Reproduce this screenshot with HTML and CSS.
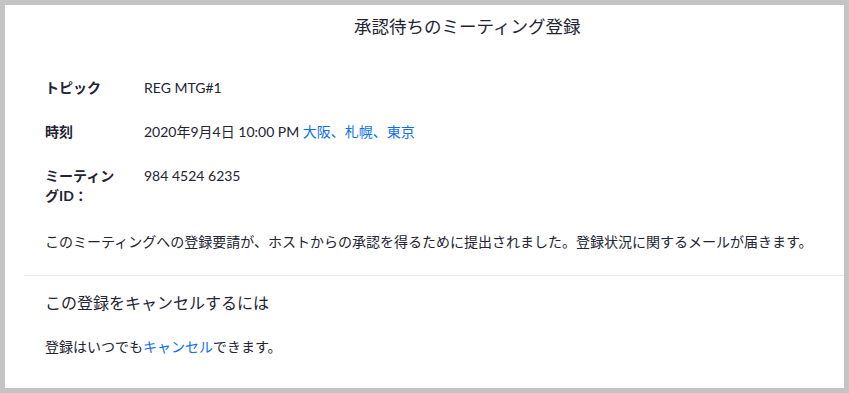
FILE: index.html
```html
<!DOCTYPE html>
<html lang="ja">
<head>
<meta charset="utf-8">
<title>承認待ちのミーティング登録</title>
<link rel="stylesheet" href="styles.css">
</head>
<body>
<div class="frame">
  <h1 class="title">承認待ちのミーティング登録</h1>
  <div class="details">
    <div class="row">
      <div class="label">トピック</div>
      <div class="value">REG MTG#1</div>
    </div>
    <div class="row">
      <div class="label">時刻</div>
      <div class="value">2020年9月4日 10:00 PM <a class="link" href="#">大阪、札幌、東京</a></div>
    </div>
    <div class="row">
      <div class="label">ミーティングID：</div>
      <div class="value">984 4524 6235</div>
    </div>
  </div>
  <p class="notice">このミーティングへの登録要請が、ホストからの承認を得るために提出されました。登録状況に関するメールが届きます。</p>
  <hr class="divider">
  <h2 class="subtitle">この登録をキャンセルするには</h2>
  <p class="cancel">登録はいつでも<a class="link" href="#">キャンセル</a>できます。</p>
</div>
</body>
</html>
```

FILE: styles.css
```css
* { box-sizing: border-box; }
html, body { margin: 0; padding: 0; }
body {
  font-family: Lato, "Noto Sans CJK JP", "Noto Sans", sans-serif;
  color: #232333;
  background: #c4c4c4;
}
.frame {
  width: 849px;
  height: 393px;
  border: 5px solid #c4c4c4;
  background: #ffffff;
  overflow: hidden;
}
.title {
  margin: 0;
  padding: 10px 0 0 349px;
  font-size: 17.5px;
  line-height: 24px;
  font-weight: 400;
}
.details {
  margin-top: 39px;
  padding-left: 40px;
  display: flex;
  flex-direction: column;
  gap: 24px;
}
.row {
  display: flex;
  font-size: 14px;
  line-height: 20px;
}
.label {
  width: 80px;
  margin-right: 19px;
  font-weight: 700;
}
.value { flex: 1; }
.link { color: #0e71eb; text-decoration: none; }
.notice {
  margin: 26px 0 0;
  padding-left: 40px;
  font-size: 14px;
  line-height: 20px;
}
.divider {
  margin: 23px 0 0 19px;
  border: 0;
  border-top: 1px solid #ebebee;
  height: 0;
}
.subtitle {
  margin: 16px 0 0;
  padding-left: 40px;
  font-size: 16px;
  line-height: 22px;
  font-weight: 400;
}
.cancel {
  margin: 23px 0 0;
  padding-left: 40px;
  font-size: 14px;
  line-height: 20px;
}
```
